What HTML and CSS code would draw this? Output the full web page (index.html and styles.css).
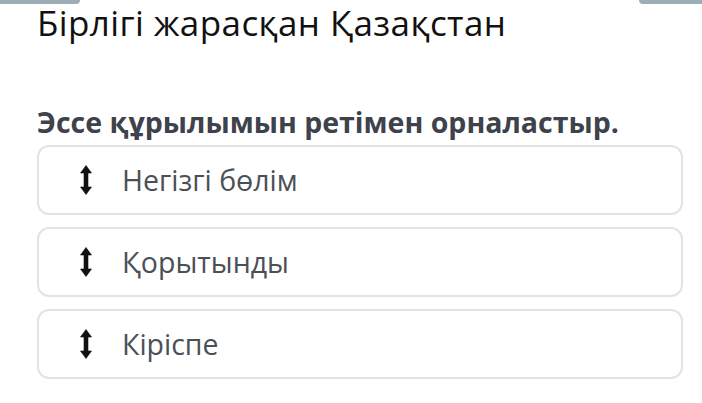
FILE: index.html
```html
<!DOCTYPE html>
<html lang="kk">
<head>
  <meta charset="UTF-8">
  <title>Эссе құрылымы</title>
  <link rel="stylesheet" href="styles.css">
</head>
<body>
  <div class="tabs">
    <div class="tab tab-left"></div>
    <div class="tab tab-right"></div>
  </div>

  <div class="container">
    <h1 class="title">Бірлігі жарасқан Қазақстан</h1>

    <h2 class="question">Эссе құрылымын ретімен орналастыр.</h2>

    <div class="list">
      <div class="item">
        <svg class="handle" viewBox="0 0 12 30" width="12" height="30">
          <path d="M6 0.5 L11.5 8 L8 8 L8 22 L11.5 22 L6 29.5 L0.5 22 L4 22 L4 8 L0.5 8 Z"/>
        </svg>
        <span class="item-text">Негізгі бөлім</span>
      </div>
      <div class="item">
        <svg class="handle" viewBox="0 0 12 30" width="12" height="30">
          <path d="M6 0.5 L11.5 8 L8 8 L8 22 L11.5 22 L6 29.5 L0.5 22 L4 22 L4 8 L0.5 8 Z"/>
        </svg>
        <span class="item-text">Қорытынды</span>
      </div>
      <div class="item">
        <svg class="handle" viewBox="0 0 12 30" width="12" height="30">
          <path d="M6 0.5 L11.5 8 L8 8 L8 22 L11.5 22 L6 29.5 L0.5 22 L4 22 L4 8 L0.5 8 Z"/>
        </svg>
        <span class="item-text">Кіріспе</span>
      </div>
    </div>
  </div>
</body>
</html>
```

FILE: styles.css
```css
* {
  margin: 0;
  padding: 0;
  box-sizing: border-box;
}

body {
  width: 702px;
  height: 403px;
  overflow: hidden;
  background: white;
  font-family: 'Open Sans', 'Noto Sans', sans-serif;
}

.tabs {
  display: flex;
  justify-content: space-between;
  height: 4px;
}

.tab {
  height: 4px;
  background-color: #9eaeb6;
}

.tab-left {
  width: 80px;
  border-bottom-right-radius: 4px;
}

.tab-right {
  width: 63px;
  border-bottom-left-radius: 4px;
}

.container {
  padding: 0 19px 0 37px;
}

.title {
  font-size: 35px;
  font-weight: 400;
  letter-spacing: 0.4px;
  color: #111111;
  line-height: 36px;
  margin-top: 1px;
}

.question {
  font-size: 28.5px;
  font-weight: 700;
  color: #3d424b;
  line-height: 38px;
  margin-top: 62px;
}

.list {
  display: flex;
  flex-direction: column;
  gap: 12px;
  margin-top: 4px;
}

.item {
  display: flex;
  align-items: center;
  height: 70px;
  padding-left: 41px;
  border: 2px solid #e3e3e3;
  border-radius: 12px;
}

.handle {
  fill: #111111;
  stroke: #111111;
  stroke-width: 0.6;
  stroke-linejoin: round;
  flex-shrink: 0;
}

.item-text {
  margin-left: 30px;
  font-size: 28.5px;
  color: #4b5056;
}
```
